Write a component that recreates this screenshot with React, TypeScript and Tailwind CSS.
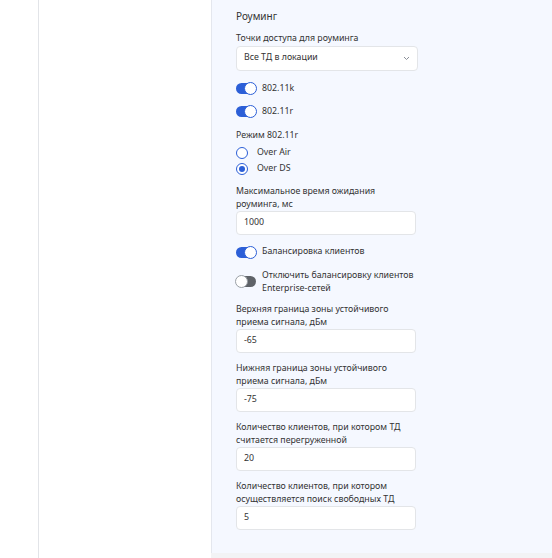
import { useState } from "react";

/* -------------------------------------------------------
   SMALL PIECES
---------------------------------------------------------*/
const Toggle = ({ on }: { on: boolean }) => (
  <span
    className={`relative inline-block w-[20px] h-[11px] rounded-full shrink-0 ${
      on ? "bg-[#2c5fd7]" : "bg-[#5f6368]"
    }`}
  >
    <span
      className={`absolute top-[-1px] w-[13px] h-[13px] rounded-full bg-white border ${
        on ? "right-[-1px] border-[#2c5fd7]" : "left-[-1px] border-[#9aa0a6]"
      }`}
    />
  </span>
);

const Radio = ({ checked }: { checked: boolean }) => (
  <span className="w-[12px] h-[12px] rounded-full border border-[#2c5fd7] bg-white flex items-center justify-center shrink-0">
    {checked && <span className="w-[6px] h-[6px] rounded-full bg-[#2c5fd7]" />}
  </span>
);

const Label = ({ children }: { children: React.ReactNode }) => (
  <div className="text-[8.8px] leading-[12.5px] text-[#333]">{children}</div>
);

const Field = ({ label, value }: { label: React.ReactNode; value: string }) => (
  <div className="mt-[9px]">
    <Label>{label}</Label>
    <div className="mt-[1px] w-[180px] h-[24px] bg-white border border-[#e3e5e8] rounded-[4px] px-[7px] flex items-center text-[8.8px] text-[#333]">
      {value}
    </div>
  </div>
);

/* -------------------------------------------------------
   PAGE
---------------------------------------------------------*/
export default function App() {
  const [mode] = useState("ds");

  return (
    <div
      className="flex w-full h-[558px] bg-white overflow-hidden"
      style={{ fontFamily: '"Noto Sans", "Open Sans", sans-serif' }}
    >
      <div className="w-[39px] border-r border-[#e2e4e8] shrink-0" />
      <div className="w-[172px] shrink-0" />

      <div className="flex-1 flex flex-col">
        <div className="h-[553px] bg-[#f5f8ff] border-l border-[#e4e7ee] pl-[24px] pt-[9px] flex flex-col">
          <div className="text-[10px] leading-[14px] text-[#333]">Роуминг</div>

          <div className="mt-[9px]">
            <Label>Точки доступа для роуминга</Label>
            <div className="mt-[1px] w-[182px] h-[25px] bg-white border border-[#e3e5e8] rounded-[4px] pl-[7px] pr-[7px] flex items-center justify-between text-[8.8px] text-[#333]">
              <span>Все ТД в локации</span>
              <svg width="7" height="5" viewBox="0 0 7 5" fill="none">
                <path d="M1 1l2.5 2.5L6 1" stroke="#8a8f98" strokeWidth="1" />
              </svg>
            </div>
          </div>

          <div className="mt-[12px] flex items-center gap-[6px] h-[12px]">
            <Toggle on />
            <span className="text-[8.8px] text-[#333]">802.11k</span>
          </div>
          <div className="mt-[11px] flex items-center gap-[6px] h-[12px]">
            <Toggle on />
            <span className="text-[8.8px] text-[#333]">802.11r</span>
          </div>

          <div className="mt-[11px]">
            <Label>Режим 802.11r</Label>
          </div>
          <div className="mt-[5px] flex items-center gap-[9px] h-[14px]">
            <Radio checked={mode === "air"} />
            <span className="text-[8.8px] text-[#333]">Over Air</span>
          </div>
          <div className="mt-[2px] flex items-center gap-[9px] h-[14px]">
            <Radio checked={mode === "ds"} />
            <span className="text-[8.8px] text-[#333]">Over DS</span>
          </div>

          <Field
            label={
              <>
                Максимальное время ожидания
                <br />
                роуминга, мс
              </>
            }
            value="1000"
          />

          <div className="mt-[11px] flex items-center gap-[6px] h-[12px]">
            <Toggle on />
            <span className="text-[8.8px] text-[#333]">Балансировка клиентов</span>
          </div>

          <div className="mt-[11px] flex items-center gap-[6px]">
            <Toggle on={false} />
            <Label>
              Отключить балансировку клиентов
              <br />
              Enterprise-сетей
            </Label>
          </div>

          <Field
            label={
              <>
                Верхняя граница зоны устойчивого
                <br />
                приема сигнала, дБм
              </>
            }
            value="-65"
          />
          <Field
            label={
              <>
                Нижняя граница зоны устойчивого
                <br />
                приема сигнала, дБм
              </>
            }
            value="-75"
          />
          <Field
            label={
              <>
                Количество клиентов, при котором ТД
                <br />
                считается перегруженной
              </>
            }
            value="20"
          />
          <Field
            label={
              <>
                Количество клиентов, при котором
                <br />
                осуществляется поиск свободных ТД
              </>
            }
            value="5"
          />
        </div>
        <div className="flex-1 bg-[#f2f3f5]" />
      </div>
    </div>
  );
}
